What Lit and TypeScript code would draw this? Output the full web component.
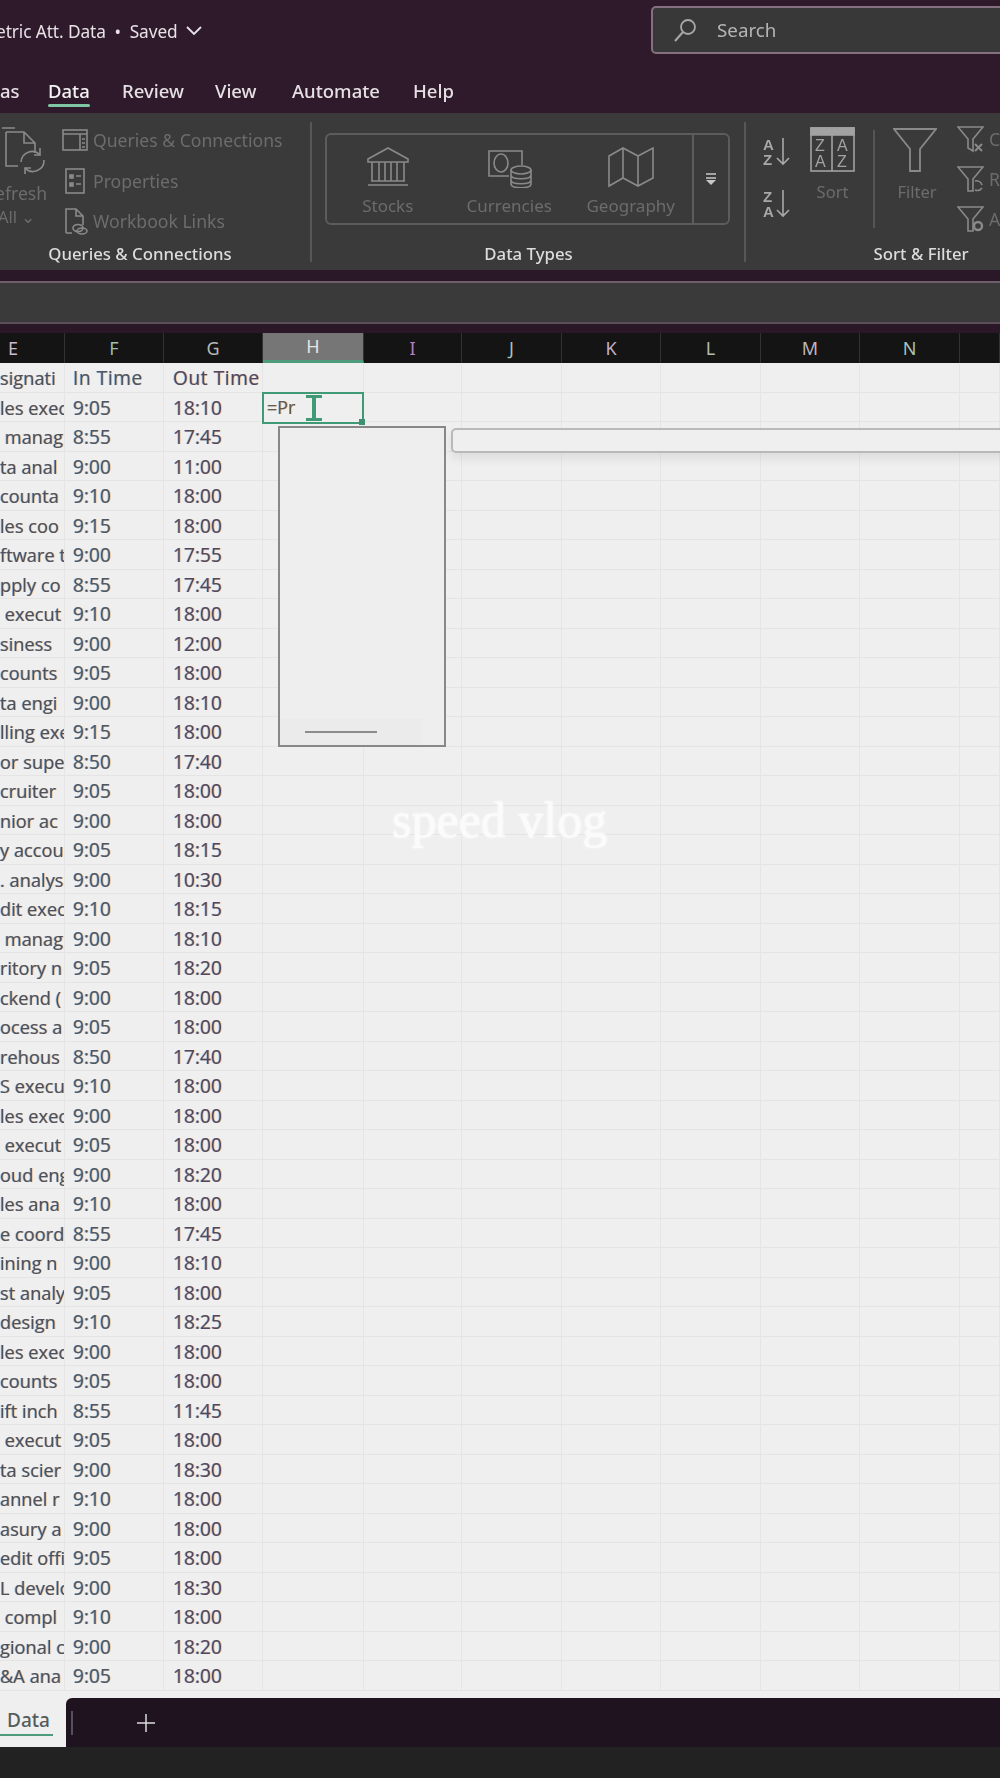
import { LitElement, html, css, svg } from "lit";
import { customElement } from "lit/decorators.js";

const E = ["signati","les exec"," manag","ta anal","counta","les coo","ftware t","pply co"," execut","siness","counts","ta engi","lling exe","or supe","cruiter","nior ac","y accou",". analys","dit exec"," manag","ritory n","ckend (","ocess a","rehous","S execu","les exec"," execut","oud eng","les ana","e coord","ining n","st analy","design","les exec","counts","ift inch"," execut","ta scier","annel r","asury a","edit offi","L develo"," compl","gional c","&A ana"];
const F = ["In Time","9:05","8:55","9:00","9:10","9:15","9:00","8:55","9:10","9:00","9:05","9:00","9:15","8:50","9:05","9:00","9:05","9:00","9:10","9:00","9:05","9:00","9:05","8:50","9:10","9:00","9:05","9:00","9:10","8:55","9:00","9:05","9:10","9:00","9:05","8:55","9:05","9:00","9:10","9:00","9:05","9:00","9:10","9:00","9:05"];
const G = ["Out Time","18:10","17:45","11:00","18:00","18:00","17:55","17:45","18:00","12:00","18:00","18:10","18:00","17:40","18:00","18:00","18:15","10:30","18:15","18:10","18:20","18:00","18:00","17:40","18:00","18:00","18:00","18:20","18:00","17:45","18:10","18:00","18:25","18:00","18:00","11:45","18:00","18:30","18:00","18:00","18:00","18:30","18:00","18:20","18:00"];
const COLS = ["E","F","G","H","I","J","K","L","M","N",""];
const HEAD_COLOR: Record<string,string> = {E:"#cbb9cc",F:"#9dbfae",G:"#b8b8b8",H:"#e4e4e4",I:"#b07fc8",J:"#a8c4b4",K:"#c4b0c4",L:"#aebfb4",M:"#c0b4bc",N:"#a9c2b6"};

const icon = (w:number,h:number,body:unknown) => html`<svg width=${w} height=${h} viewBox="0 0 ${w} ${h}" fill="none" stroke="currentColor" stroke-width="1.6">${body}</svg>`;

const refresh = icon(46,50,svg`<path d="M2 2h13M6 6h18l11 11v10M6 6v34h12M24 6v11h11"/><path d="M21 36a11 11 0 0 1 19-7M44 34a11 11 0 0 1-19 8"/><path d="M40 22v7h-6M25 48v-6h6"/>`);
const queriesI = icon(26,24,svg`<rect x="1" y="2" width="24" height="20"/><path d="M1 6h24M18 6v16M20 11h3M20 15h3M20 19h3"/>`);
const propsI = icon(26,26,svg`<rect x="4" y="1" width="18" height="24"/><rect x="8" y="7" width="3" height="3" fill="currentColor"/><rect x="8" y="15" width="3" height="3" fill="currentColor"/><path d="M14 8h5M14 16h5"/>`);
const linksI = icon(26,28,svg`<path d="M4 26V2h10l7 7v9M14 2v7h7M4 26h6"/><ellipse cx="16" cy="21" rx="5" ry="3.5"/><ellipse cx="20" cy="24" rx="5" ry="3"/>`);
const stocksI = icon(46,42,svg`<path d="M23 2 3 13v3h40v-3zM7 16v19M14 16v19M20 16v19M26 16v19M32 16v19M39 16v19M3 39h40M6 35h34"/>`);
const currI = icon(46,42,svg`<path d="M30 5H3v25h20M30 5h6v14"/><ellipse cx="15" cy="17" rx="7" ry="9"/><ellipse cx="35" cy="24" rx="10" ry="4"/><path d="M25 24v14c0 5 20 5 20 0V24M25 29c0 5 20 5 20 0M25 34c0 5 20 5 20 0"/>`);
const geoI = icon(48,42,svg`<path d="M2 10 16 2l15 8 15-8v30l-15 8-15-8-14 8zM16 2v30M31 10v30"/>`);
const moreI = icon(14,14,svg`<path d="M2 2h10M2 6h10" stroke-width="1.5"/><path d="M2 8l5 5 5-5z" fill="currentColor" stroke="none"/>`);
const tx = (x:number,y:number,t:string,size=14,bold=true) => svg`<text x=${x} y=${y} font-family="Liberation Sans" font-size=${size} font-weight=${bold?700:400} fill="currentColor" stroke="none">${t}</text>`;
const azI = icon(28,30,svg`${tx(0,13,"A",15)}${tx(0,28,"Z",15)}<path d="M20 1v26M14 21l6 6 6-6"/>`);
const zaI = icon(28,30,svg`${tx(0,13,"Z",15)}${tx(0,28,"A",15)}<path d="M20 1v26M14 21l6 6 6-6"/>`);
const sortI = icon(45,46,svg`<rect x="1" y="1" width="43" height="43"/><rect x="1" y="1" width="43" height="7" fill="currentColor"/><path d="M22 8v36"/>${tx(5,24,"Z",16,false)}${tx(5,40,"A",16,false)}${tx(27,24,"A",16,false)}${tx(27,40,"Z",16,false)}`);
const filterI = icon(44,46,svg`<path d="M1 2h42L27 22v22H17V22z" stroke-width="1.8"/>`);
const f1 = icon(27,28,svg`<path d="M1 2h25L16 14v12l-5-3V14z"/><path d="M18 19l7 7M25 19l-7 7" stroke-width="2"/>`);
const f2 = icon(27,28,svg`<path d="M1 2h25L16 14v12h-5V14z"/><path d="M18 16a6 6 0 0 1 7 4M25 23a6 6 0 0 1-7 2"/>`);
const f3 = icon(27,28,svg`<path d="M1 2h25L16 14v12h-5V14z"/><circle cx="21" cy="21" r="4" stroke-width="2.4"/>`);
const searchI = icon(24,24,svg`<circle cx="15" cy="9" r="7" stroke-width="1.8"/><path d="M10 14 2 23" stroke-width="2"/>`);
const chevron = icon(16,10,svg`<path d="M1 1l7 7 7-7" stroke-width="1.8"/>`);
const plus = icon(18,18,svg`<path d="M9 0v18M0 9h18" stroke-width="1.5"/>`);

@customElement("app-root")
export class AppRoot extends LitElement {
  static styles = css`
    :host { display:block; width:1000px; height:1778px; overflow:hidden; background:#efefef; font-family:"Noto Sans","Open Sans",sans-serif; }
    .page { filter:blur(.5px); display:flex; flex-direction:column; height:1778px; }

    .chrome { background:#2e1a2b; height:113px; flex:none; display:flex; flex-direction:column; }
    .titlebar { height:64px; display:flex; align-items:center; justify-content:space-between; color:#e8e2e6; font-size:17.3px; }
    .doc { display:flex; align-items:center; gap:8px; margin:-2px 0 0 -4px; letter-spacing:-.1px; }
    .search { width:360px; height:48px; margin:-4px -11px 0 0; box-sizing:border-box; background:#383838; border:2px solid #85707f; border-radius:5px; display:flex; align-items:center; gap:20px; padding-left:20px; color:#b5b5b5; font-size:18.8px; }
    .search svg { color:#a8a8a8; }
    .tabs { height:49px; display:flex; align-items:flex-start; padding-top:14px; box-sizing:border-box; color:#e6e0e4; font-size:18.5px; font-weight:500; }
    .tab { position:relative; white-space:nowrap; line-height:26px; }
    .tab.on { color:#f3f3f3; }
    .tab.on::after { content:""; position:absolute; left:0; right:0; bottom:-4px; height:3px; background:#7fc7a4; border-radius:2px; }
    .t0 { width:48px; } .t1 { width:74px; } .t2 { width:93px; } .t3 { width:77px; } .t4 { width:121px; }

    .ribbon { flex:none; height:157px; background:#3a3a3a; display:flex; overflow:hidden; color:#8a8a8a; }
    .sec { display:grid; grid-template-rows:126px 31px; flex:none; }
    .sec-label { color:#dcdcdc; font-size:16.8px; font-weight:500; text-align:center; line-height:30px; white-space:nowrap; }
    .sep { flex:none; width:2px; height:140px; margin-top:9px; background:#575757; }
    .dim { color:#6c6c6c; font-size:17.6px; white-space:nowrap; }

    .s-q { width:310px; }
    .s-q .sec-label { padding-right:30px; }
    .q-body { display:flex; }
    .refresh { width:62px; flex:none; padding-top:13px; box-sizing:border-box; display:flex; flex-direction:column; }
    .refresh .dim { line-height:24px; margin-left:-5px; }
    .refresh .dim + .dim { margin-left:-2px; font-size:16.5px; }
    .refresh svg { margin-bottom:5px; }
    .stack { padding-top:7px; }
    .row { height:40.5px; display:flex; align-items:center; gap:5px; }

    .s-d { width:419px; margin-left:13px; }
    .s-d .sec-label { padding-right:12px; }
    .d-box { margin-top:20px; width:405px; height:92px; box-sizing:border-box; border:2px solid #5c5c5c; border-radius:6px; display:flex; }
    .d-item { width:121.5px; display:flex; flex-direction:column; align-items:center; padding-top:11px; box-sizing:border-box; gap:6px; }
    .d-item .dim { font-size:17px; line-height:24px; }
    .d-more { flex:1; border-left:2px solid #5c5c5c; display:flex; align-items:center; justify-content:center; color:#c8c8c8; }

    .s-s { width:252px; }
    .s-s .sec-label { padding-left:96px; }
    .s-body { display:flex; }
    .az { width:54px; flex:none; padding:24px 0 0 17px; box-sizing:border-box; display:flex; flex-direction:column; gap:22px; color:#a8a8a8; }
    .btn { flex:none; display:flex; flex-direction:column; align-items:center; padding-top:14px; gap:7px; }
    .btn .dim { font-size:16.5px; line-height:24px; }
    .b-sort { width:65px; margin-right:8px; color:#a2a2a2; } .b-filter { width:84px; margin-left:-2px; }
    .b-filter .dim { margin-left:4px; }
    .isep { flex:none; width:2px; height:98px; margin-top:17px; background:#555; }
    .fl { display:flex; flex-direction:column; gap:12px; padding-top:12px; }
    .fl div { display:flex; gap:5px; align-items:center; height:28px; }

    .strip { flex:none; height:11px; background:#2a1727; border-bottom:2px solid #6f5f6b; box-sizing:content-box; }
    .fbar { flex:none; height:39px; background:#3a3a3a; border-bottom:2px solid #5b4f58; }
    .strip2 { flex:none; height:9px; background:#2a1727; }

    .sheet { position:relative; flex:none; height:1365px; background:#efefef; overflow:hidden; }
    .grid { display:grid; grid-template-columns:65px 99px 99px 101px 98px 100px 99px 100px 99px 100px 40px; grid-template-rows:30px repeat(45,29.5px); }
    .hd { background:#141414; border-right:1px solid #333; box-sizing:border-box; text-align:center; font-size:18px; line-height:30px; }
    .hd.first { text-align:left; padding-left:8px; }
    .hd.sel { background:#767676; border-bottom:3px solid #4e9c7c; line-height:27px; }
    .c { box-sizing:border-box; border-right:1px solid #e5e5e5; border-bottom:1px solid #e4e4e4; overflow:hidden; white-space:pre; font-family:"Open Sans","Noto Sans",sans-serif; font-size:19.2px; line-height:29px; color:#50505a; text-shadow:.7px 0 rgba(215,140,50,.5), -.7px 0 rgba(60,140,215,.5); }
    .c.e { font-size:18.3px; }
    .c.f { padding-left:8px; color:#4c5664; }
    .c.g { padding-left:9px; color:#56465a; }
    .c.top { letter-spacing:.55px; }
    .c.act { position:relative; overflow:visible; border:2.5px solid #3f9a75; margin:-1px 0 0 -1px; width:102px; height:32px; padding-left:3px; line-height:26px; font-size:18px; color:#6b5a48; z-index:2; }
    .handle { position:absolute; right:-3px; bottom:-3px; width:6px; height:6px; background:#3f8f70; }
    .beam { position:absolute; left:41px; top:1px; width:18px; height:26px; color:#3f9a75; }

    .popup { position:absolute; left:278px; top:93px; width:168px; height:321px; box-sizing:border-box; border:2px solid #888; background:#eeeeee; z-index:3; display:flex; flex-direction:column; justify-content:flex-end; }
    .pop-foot { height:26px; width:142px; background:#ebebeb; display:flex; padding-left:25px; box-sizing:border-box; align-items:center; }
    .pop-foot i { display:block; width:72px; height:2.5px; background:#8c8c8c; }
    .tip { position:absolute; left:451px; top:95px; width:570px; height:25px; box-sizing:border-box; border:2px solid #b9b9b9; border-radius:5px; background:#efefef; box-shadow:0 6px 10px rgba(0,0,0,.07); z-index:3; }
    .mark { position:absolute; left:392px; top:459px; font-family:"Liberation Serif",serif; font-size:50px; line-height:56px; color:#fbfbfb; text-shadow:0 0 3px #fff; z-index:4; white-space:nowrap; }

    .tabsbar { flex:none; height:49px; display:flex; background:#efefef; }
    .sheet-tab { width:66px; height:44px; flex:none; background:#efefef; box-sizing:border-box; padding-left:7px; color:#555c5a; font-size:19px; font-weight:500; line-height:44px; position:relative; }
    .sheet-tab::after { content:""; position:absolute; left:0; width:53px; bottom:6px; height:2px; background:#4e9c7c; }
    .tail-wrap { flex:1; display:flex; background:#1f1320; border-radius:6px 0 0 0; align-items:center; color:#dcdcdc; }
    .bar { width:2px; height:24px; background:#55505a; margin-left:5px; }
    .plus { margin-left:64px; display:flex; }
    .status { flex:none; height:31px; background:#222; }
  `;

  render() {
    const cells = [];
    for (const c of COLS) {
      cells.push(html`<div class="hd ${c==="H"?"sel":""} ${c==="E"?"first":""}" style="color:${HEAD_COLOR[c]||"#bbb"}">${c}</div>`);
    }
    for (let r=0;r<45;r++) {
      const top = r===0 ? "top" : "";
      for (let i=0;i<COLS.length;i++) {
        if (i===0) cells.push(html`<div class="c e">${E[r]}</div>`);
        else if (i===1) cells.push(html`<div class="c f ${top}">${F[r]}</div>`);
        else if (i===2) cells.push(html`<div class="c g ${top}">${G[r]}</div>`);
        else if (i===3 && r===1) cells.push(html`<div class="c act">=Pr<svg class="beam" viewBox="0 0 18 26" fill="none" stroke="currentColor"><path d="M1 1.5h16M1 24.5h16" stroke-width="3"/><path d="M9 2v22" stroke-width="4"/></svg><span class="handle"></span></div>`);
        else cells.push(html`<div class="c"></div>`);
      }
    }
    return html`<div class="page">
      <div class="chrome">
        <div class="titlebar">
          <div class="doc">etric Att. Data &nbsp;•&nbsp; Saved ${chevron}</div>
          <div class="search">${searchI}<span>Search</span></div>
        </div>
        <div class="tabs">
          <div class="tab t0">as</div>
          <div class="tab t1"><span class="tab on">Data</span></div>
          <div class="tab t2">Review</div>
          <div class="tab t3">View</div>
          <div class="tab t4">Automate</div>
          <div class="tab">Help</div>
        </div>
      </div>
      <div class="ribbon">
        <div class="sec s-q">
          <div class="q-body">
            <div class="refresh">${refresh}<span class="dim">efresh</span><span class="dim">All ⌄</span></div>
            <div class="stack">
              <div class="row">${queriesI}<span class="dim">Queries &amp; Connections</span></div>
              <div class="row">${propsI}<span class="dim">Properties</span></div>
              <div class="row">${linksI}<span class="dim">Workbook Links</span></div>
            </div>
          </div>
          <div class="sec-label">Queries &amp; Connections</div>
        </div>
        <div class="sep"></div>
        <div class="sec s-d">
          <div class="d-box">
            <div class="d-item">${stocksI}<span class="dim">Stocks</span></div>
            <div class="d-item">${currI}<span class="dim">Currencies</span></div>
            <div class="d-item">${geoI}<span class="dim">Geography</span></div>
            <div class="d-more">${moreI}</div>
          </div>
          <div class="sec-label">Data Types</div>
        </div>
        <div class="sep"></div>
        <div class="sec s-s">
          <div class="s-body">
            <div class="az">${azI}${zaI}</div>
            <div class="btn b-sort">${sortI}<span class="dim">Sort</span></div>
            <div class="isep"></div>
            <div class="btn b-filter">${filterI}<span class="dim">Filter</span></div>
            <div class="fl"><div>${f1}<span class="dim">C</span></div><div>${f2}<span class="dim">R</span></div><div>${f3}<span class="dim">A</span></div></div>
          </div>
          <div class="sec-label">Sort &amp; Filter</div>
        </div>
      </div>
      <div class="strip"></div>
      <div class="fbar"></div>
      <div class="strip2"></div>
      <div class="sheet">
        <div class="grid">${cells}</div>
        <div class="popup"><div class="pop-foot"><i></i></div></div>
        <div class="tip"></div>
        <div class="mark">speed vlog</div>
      </div>
      <div class="tabsbar">
        <div class="sheet-tab">Data</div>
        <div class="tail-wrap"><span class="bar"></span><span class="plus">${plus}</span></div>
      </div>
      <div class="status"></div>
    </div>`;
  }
}
